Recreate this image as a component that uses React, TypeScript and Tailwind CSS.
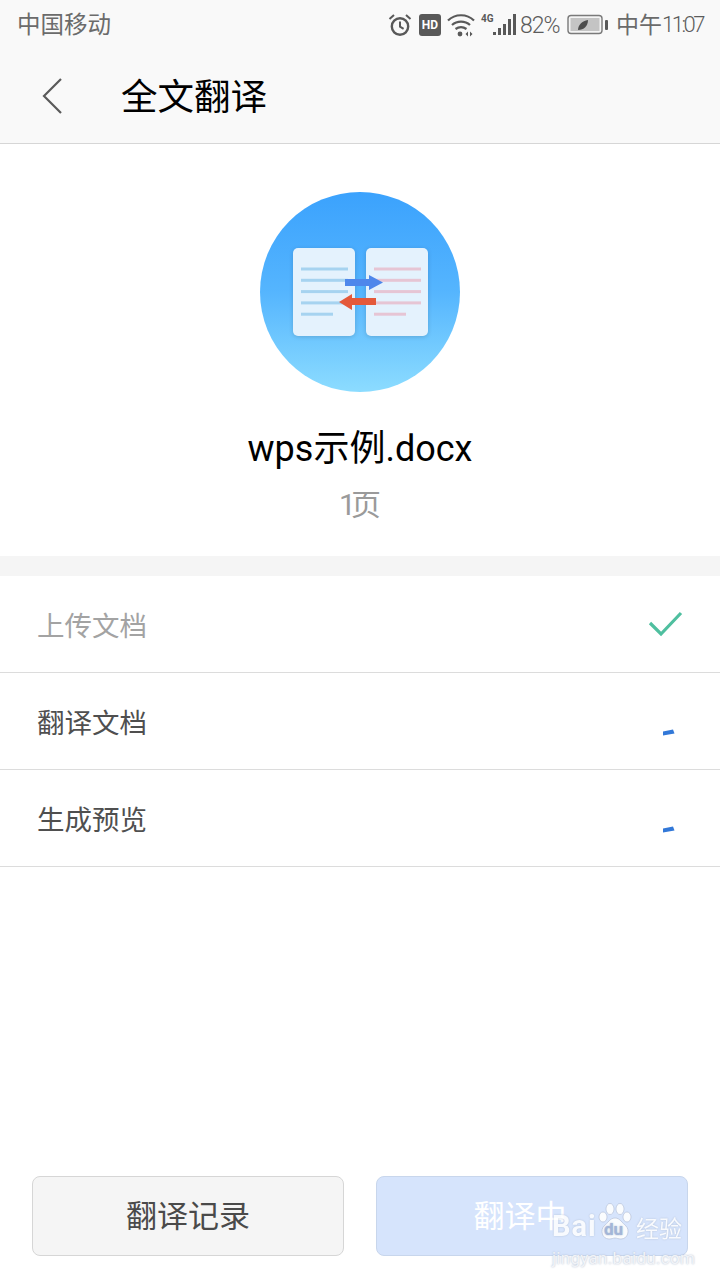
const FONT = 'font-["Roboto","Noto_Sans_CJK_SC",sans-serif]';

function AlarmIcon() {
  return (
    <svg width="24" height="24" viewBox="0 0 24 24" fill="none" stroke="#595959" strokeWidth="2.4">
      <circle cx="12" cy="13.5" r="8.2" />
      <path d="M12 8.5v5.2l3.6 2.2" strokeWidth="2" />
      <path d="M1.5 6 6 2M22.5 6 18 2" strokeWidth="2" />
    </svg>
  );
}

function WifiIcon() {
  return (
    <svg width="28" height="24" viewBox="0 0 28 24" fill="none" stroke="#595959" strokeWidth="2.2">
      <path d="M1 7.5C8 0.5 20 0.5 27 7.5" />
      <path d="M5 12c5-4.5 13-4.5 18 0" />
      <path d="M8.5 16c3.5-2.5 7.5-2.5 11 0" />
      <circle cx="13" cy="21" r="2.4" fill="#595959" stroke="none" />
      <path d="M21 18.5v5l-2.5-2.5zM23 18.5v5l2.5-2.5z" fill="#595959" stroke="none" />
    </svg>
  );
}

function SignalIcon() {
  return (
    <svg width="24" height="22" viewBox="0 0 24 22" fill="#595959">
      <rect x="0" y="18" width="3" height="3" />
      <rect x="5" y="14" width="3" height="7" />
      <rect x="10" y="10" width="3" height="11" />
      <rect x="15" y="5" width="3" height="16" />
      <rect x="20" y="0" width="3" height="21" />
    </svg>
  );
}

function BatteryIcon() {
  return (
    <svg width="42" height="22" viewBox="0 0 42 22">
      <rect x="1" y="1.5" width="34" height="18" rx="3" fill="#f4f4f4" stroke="#7a7a7a" strokeWidth="1.4" />
      <rect x="3.5" y="4" width="29" height="13" fill="#c4c4c4" />
      <rect x="38" y="6" width="3" height="10" rx="1" fill="#595959" />
      <path d="M11 16c0-5 4-9 10-10 0 6-4 10-10 10z" fill="#4d4d4d" />
    </svg>
  );
}

function StatusBar() {
  return (
    <div className="h-[50px] flex items-center bg-[#f9f9f9] pl-[17px] pr-[15px] text-[#6b6b6b]">
      <span className="pt-[2px] text-[23.5px] leading-none">中国移动</span>
      <div className="ml-auto flex items-center">
        <AlarmIcon />
        <span className="ml-[7px] w-[22px] h-[22px] rounded-[3px] bg-[#595959] text-white text-[12px] font-bold flex items-center justify-center leading-none">
          HD
        </span>
        <span className="ml-[6px]"><WifiIcon /></span>
        <span className="ml-[6px] w-[12px] self-start mt-[1px] text-[10px] font-bold leading-none text-[#595959]">4G</span>
        <span className="ml-[0px]"><SignalIcon /></span>
        <span className="ml-[3px] w-[39px] text-[23px] font-light tracking-[-1px] leading-none whitespace-nowrap text-[#5c5c5c]">82%</span>
        <span className="ml-[8px]"><BatteryIcon /></span>
        <span className="ml-[7px] flex items-center w-[89px] whitespace-nowrap leading-none">
          <span className="text-[23px]">中午</span>
          <span className="text-[22px] font-light tracking-[-2.5px] text-[#5c5c5c]">11:07</span>
        </span>
      </div>
    </div>
  );
}

function Header() {
  return (
    <div className="h-[94px] flex items-center bg-[#f9f9f9] border-b border-[#d6d6d6] pb-[2px]">
      <svg className="ml-[41px]" width="22" height="38" viewBox="0 0 22 38" fill="none" stroke="#5a5a5a" strokeWidth="2.2">
        <path d="M20 2 3 19l17 17" />
      </svg>
      <h1 className="ml-[58px] mt-[5px] text-[36.5px] leading-none text-black">全文翻译</h1>
    </div>
  );
}

function DocIcon() {
  const lines = [0, 1, 2, 3, 4];
  return (
    <svg width="200" height="200" viewBox="0 0 200 200">
      <defs>
        <linearGradient id="bg" x1="0" y1="0" x2="0" y2="1">
          <stop offset="0" stopColor="#3ba2fd" />
          <stop offset="0.5" stopColor="#55b5fe" />
          <stop offset="1" stopColor="#8cdcff" />
        </linearGradient>
      </defs>
      <circle cx="100" cy="100" r="100" fill="url(#bg)" />
      <g className="drop-shadow-sm">
        <rect x="33" y="56" width="62" height="88" rx="5" fill="#e4f2fd" />
        <rect x="106" y="56" width="62" height="88" rx="5" fill="#e4f2fd" />
      </g>
      {lines.map((i) => (
        <rect key={i} x="41" y={75.5 + i * 11.3} width={i === 4 ? 32 : 47} height="3" fill="#a6d3f0" />
      ))}
      {lines.map((i) => (
        <rect key={i} x="114" y={75.5 + i * 11.3} width={i === 4 ? 32 : 47} height="3" fill="#e6c5d4" />
      ))}
      <path d="M85 87h24v-4l14 7.5-14 7.5v-4H85z" fill="#4e87eb" />
      <path d="M116 106H92v-4l-13 8 13 8v-5h24z" fill="#e4593a" />
    </svg>
  );
}

function StepRow({ label, done }: { label: string; done?: boolean }) {
  return (
    <div className="h-[97px] flex items-center justify-between border-b border-[#dcdcdc] pl-[37px]">
      <span className={`pt-[5px] text-[27.5px] leading-none ${done ? 'text-[#a3a3a3]' : 'text-[#4f4f4f]'}`}>{label}</span>
      {done ? (
        <svg className="mr-[36px] mt-[1px]" width="36" height="28" viewBox="0 0 36 28" fill="none" stroke="#4fbf9f" strokeWidth="3.2">
          <path d="M2 12l11 11L33 2" />
        </svg>
      ) : (
        <svg className="mr-[45px] mt-[22px]" width="13" height="7" viewBox="0 0 13 7" fill="#3278d8">
          <path d="M1 2.5 11 .5l1.5 4L1 6.5z" />
        </svg>
      )}
    </div>
  );
}

function Watermark() {
  return (
    <div className="absolute left-[552px] top-[1203px] w-[132px] text-white pointer-events-none [text-shadow:0_0_2px_#a9b6cc]">
      <div className="flex items-end h-[38px] leading-none">
        <span className="w-[45px] text-[29px] font-bold tracking-[1px] opacity-85">Bai</span>
        <span className="relative w-[36px] h-[38px]">
          <svg width="36" height="38" viewBox="0 0 36 38" fill="#ffffff" stroke="#a9b6cc" strokeWidth="0.6" opacity="0.9">
            <ellipse cx="6" cy="14" rx="4" ry="5" />
            <ellipse cx="13" cy="6" rx="4" ry="5.5" />
            <ellipse cx="23" cy="6" rx="4" ry="5.5" />
            <ellipse cx="30" cy="14" rx="4" ry="5" />
            <path d="M18 15c5 0 7 5 11 8 4 4 2 13-5 13-3 0-4-1-6-1s-3 1-6 1c-7 0-9-9-5-13 4-3 6-8 11-8z" />
          </svg>
          <span className="absolute left-[7px] bottom-[3px] text-[17px] font-bold text-[#a3b6d8]">du</span>
        </span>
        <span className="ml-[3px] text-[23px] opacity-85">经验</span>
      </div>
      <div className="mt-[9px] text-[17px] leading-none tracking-[0.3px] text-[#f2f4f8] whitespace-nowrap">jingyan.baidu.com</div>
    </div>
  );
}

export default function App() {
  return (
    <div className={`relative w-[720px] h-[1280px] bg-white flex flex-col overflow-hidden ${FONT}`}>
      <StatusBar />
      <Header />

      <div className="flex flex-col items-center pt-[48px] h-[412px]">
        <DocIcon />
        <div className="mt-[35px] text-[36px] leading-[44px] text-black">wps示例.docx</div>
        <div className="mt-[14px] text-[30px] leading-[40px] text-[#9a9a9a]">
          <span className="tracking-[-5px]">1</span>页
        </div>
      </div>

      <div className="h-[20px] bg-[#f5f5f5]" />

      <StepRow label="上传文档" done />
      <StepRow label="翻译文档" />
      <StepRow label="生成预览" />

      <div className="mt-auto grid grid-cols-2 gap-[32px] px-[32px] pb-[24px]">
        <button className="h-[80px] rounded-[8px] bg-[#f5f5f5] border border-[#d6d6d6] pt-[3px] text-[31px] text-[#4a4a4a]">
          翻译记录
        </button>
        <button className="h-[80px] rounded-[8px] bg-[#d6e4fc] border border-[#c8d6ec] pt-[3px] pr-[24px] text-[31px] text-white">
          翻译中
        </button>
      </div>

      <Watermark />
    </div>
  );
}
